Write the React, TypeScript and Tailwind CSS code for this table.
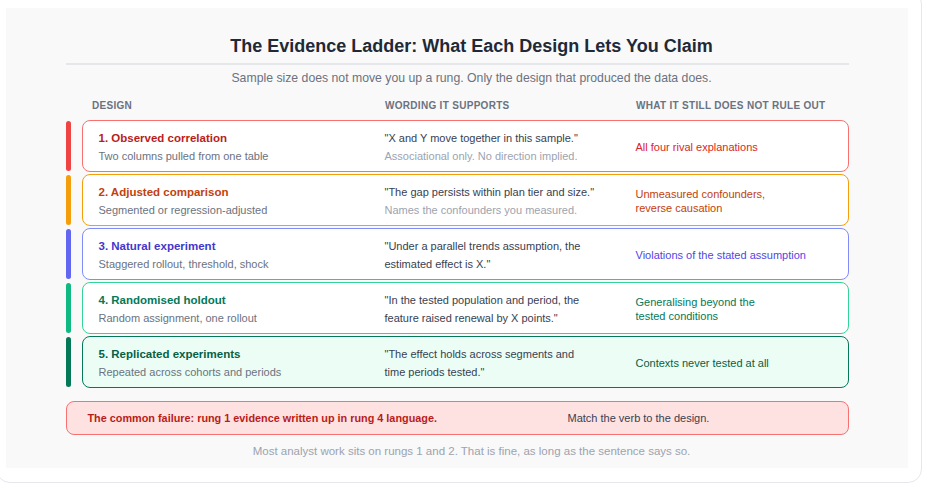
const rungs = [
  {
    title: '1. Observed correlation',
    sub: 'Two columns pulled from one table',
    quote: ['"X and Y move together in this sample."'],
    note: 'Associational only. No direction implied.',
    risk: ['All four rival explanations'],
    bar: 'bg-[#ef4444]',
    card: 'border-[#f87171] bg-white',
    titleColor: 'text-[#b91c1c]',
    riskColor: 'text-[#dc2626]',
  },
  {
    title: '2. Adjusted comparison',
    sub: 'Segmented or regression-adjusted',
    quote: ['"The gap persists within plan tier and size."'],
    note: 'Names the confounders you measured.',
    risk: ['Unmeasured confounders,', 'reverse causation'],
    bar: 'bg-[#f59e0b]',
    card: 'border-[#f59e0b] bg-white',
    titleColor: 'text-[#c2410c]',
    riskColor: 'text-[#c2410c]',
  },
  {
    title: '3. Natural experiment',
    sub: 'Staggered rollout, threshold, shock',
    quote: ['"Under a parallel trends assumption, the', 'estimated effect is X."'],
    risk: ['Violations of the stated assumption'],
    bar: 'bg-[#6366f1]',
    card: 'border-[#818cf8] bg-white',
    titleColor: 'text-[#4338ca]',
    riskColor: 'text-[#4f46e5]',
  },
  {
    title: '4. Randomised holdout',
    sub: 'Random assignment, one rollout',
    quote: ['"In the tested population and period, the', 'feature raised renewal by X points."'],
    risk: ['Generalising beyond the', 'tested conditions'],
    bar: 'bg-[#10b981]',
    card: 'border-[#34d399] bg-white',
    titleColor: 'text-[#047857]',
    riskColor: 'text-[#047857]',
  },
  {
    title: '5. Replicated experiments',
    sub: 'Repeated across cohorts and periods',
    quote: ['"The effect holds across segments and', 'time periods tested."'],
    risk: ['Contexts never tested at all'],
    bar: 'bg-[#047857]',
    card: 'border-[#047857] bg-[#ecfdf5]',
    titleColor: 'text-[#065f46]',
    riskColor: 'text-[#065f46]',
  },
];

export default function App() {
  return (
    <div className="h-[487px] w-[926px] overflow-hidden bg-white font-['Liberation_Sans',Arial,sans-serif]">
      <div className="-ml-[4px] -mt-[10px] h-[493px] w-[926px] rounded-[14px] border border-[#e5e7eb] pl-[9px] pt-[17px]">
        <div className="h-[460px] w-[902px] bg-[#f9f9f9] pl-[60px] pt-[26px]">
          <div className="w-[811px]">
            <h1 className="text-center text-[18px] font-bold leading-[24px] text-[#1f2937]">
              The Evidence Ladder: What Each Design Lets You Claim
            </h1>
            <div className="mt-[5px] h-[2px] w-[783px] bg-[#e5e7eb]" />
            <p className="mt-[5px] text-center text-[12.25px] leading-[16px] text-[#6b7280]">
              Sample size does not move you up a rung. Only the design that produced the data does.
            </p>

            <div className="mt-[13px] flex w-[783px] text-[10px] font-bold uppercase leading-[14px] tracking-[0.03em] text-[#6b7280]">
              <div className="w-[319px] pl-[26px]">Design</div>
              <div className="w-[251px]">Wording it supports</div>
              <div>What it still does not rule out</div>
            </div>

            <div className="mt-[7px] flex w-[783px] flex-col gap-[2px]">
              {rungs.map(r => (
                <div key={r.title} className="flex h-[52px] items-stretch">
                  <div className={`my-[1px] w-[5px] shrink-0 rounded-full ${r.bar}`} />
                  <div
                    className={`ml-[11px] flex flex-1 items-center rounded-[8px] border-[1.5px] pl-[15.5px] pt-[2px] ${r.card}`}
                  >
                    <div className="w-[286px] shrink-0">
                      <div className={`text-[11.5px] font-bold leading-[18px] ${r.titleColor}`}>{r.title}</div>
                      <div className="text-[11px] leading-[18px] text-[#6b7280]">{r.sub}</div>
                    </div>
                    <div className="w-[251px] shrink-0 whitespace-nowrap text-[11px] leading-[18px]">
                      {r.quote.map(line => (
                        <div key={line} className="text-[#374151]">{line}</div>
                      ))}
                      {r.note && <div className="text-[#9ca3af]">{r.note}</div>}
                    </div>
                    <div className={`text-[11px] leading-[14px] ${r.riskColor}`}>
                      {r.risk.map(line => (
                        <div key={line}>{line}</div>
                      ))}
                    </div>
                  </div>
                </div>
              ))}
            </div>

            <div className="mt-[13px] flex h-[34px] w-[783px] items-center rounded-[8px] border-[1.5px] border-[#f87171] bg-[#fee2e2] pl-[20.5px] text-[11px]">
              <div className="w-[480px] text-[10.85px] font-bold text-[#b91c1c]">
                The common failure: rung 1 evidence written up in rung 4 language.
              </div>
              <div className="text-[#374151]">Match the verb to the design.</div>
            </div>

            <p className="mt-[8px] text-center text-[11.5px] leading-[16px] text-[#9ca3af]">
              Most analyst work sits on rungs 1 and 2. That is fine, as long as the sentence says so.
            </p>
          </div>
        </div>
      </div>
    </div>
  );
}
